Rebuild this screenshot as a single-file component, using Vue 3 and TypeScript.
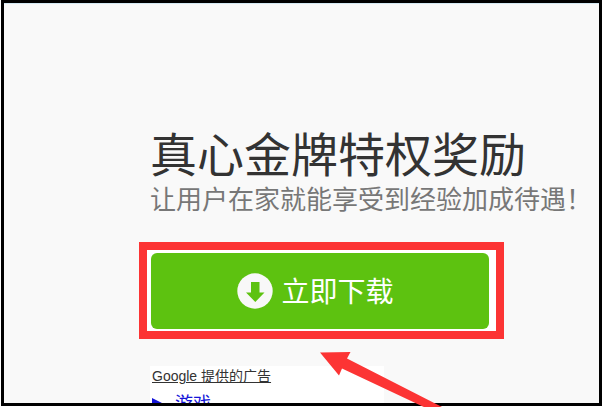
<script setup lang="ts">
const title: string = '真心金牌特权奖励'
const subtitle: string = '让用户在家就能享受到经验加成待遇！'
</script>

<template>
  <div class="page">
    <main class="frame">
      <h1 class="title">{{ title }}</h1>
      <p class="subtitle">{{ subtitle }}</p>
      <div class="highlight">
        <button type="button" class="download">
          <svg class="download-icon" viewBox="0 0 36 36" aria-hidden="true">
            <circle cx="18" cy="18" r="17.7" fill="#f8f8f8" />
            <path d="M14 9h8.500v10.500h5L18.300 29 9 19.500h5z" fill="#5dc210" />
          </svg>
          <span>立即下载</span>
        </button>
      </div>
      <section class="ads">
        <a href="#" class="ads-label">Google 提供的广告</a>
        <a href="#" class="ads-item">
          <svg class="marker" viewBox="0 0 12 12" aria-hidden="true">
            <path d="M0 0l12 6-12 6z" fill="#1515d8" />
          </svg>
          <span>游戏</span>
        </a>
      </section>
      <svg class="arrow" viewBox="0 0 124 56" aria-hidden="true">
        <path d="M0 0.500L30.500 0 27 6.500 124 56H106L22 16.500 19 23.500z" fill="#fc3434" />
      </svg>
    </main>
  </div>
</template>

<style>
body {
  margin: 0;
  background: #fff;
}
</style>

<style scoped>
.page {
  box-sizing: border-box;
  height: 100vh;
  padding: 0 2px 1px 1px;
  font-family: "Liberation Sans", "Noto Sans CJK SC", sans-serif;
}

.frame {
  position: relative;
  box-sizing: border-box;
  height: 100%;
  padding: 125px 0 0 135px;
  border: 3px solid #000;
  background: #f9f9f9;
  box-shadow: inset 0 1px #d5e9f3;
}

.title {
  margin: 0 0 0 11px;
  color: #333;
  font-family: "Noto Sans CJK SC", sans-serif;
  font-size: 47px;
  font-weight: 400;
  line-height: 48px;
  white-space: nowrap;
}

.subtitle {
  margin: 6px 0 0 11px;
  color: #777;
  font-family: "Noto Sans CJK SC", sans-serif;
  font-size: 26px;
  font-weight: 400;
  line-height: 32px;
  white-space: nowrap;
}

.highlight {
  box-sizing: border-box;
  width: 365px;
  margin-top: 28px;
  padding: 3px 7px 2px 4px;
  border: 8px solid #fc3434;
  background: #fff;
}

.download {
  display: flex;
  align-items: center;
  justify-content: center;
  gap: 8px;
  width: 100%;
  height: 76px;
  padding: 0 9px 0 0;
  border: 0;
  border-radius: 6px;
  background: #5dc210;
  color: #fff;
  font-family: "Noto Sans CJK SC", sans-serif;
  font-size: 28px;
  line-height: 36px;
  cursor: pointer;
}

.download-icon {
  width: 36px;
  height: 36px;
}

.download span {
  padding-bottom: 2px;
}

.ads {
  box-sizing: border-box;
  width: 234px;
  height: 37px;
  margin: 27px 0 0 11px;
  padding-left: 2px;
  overflow: hidden;
  background: #fff;
}

.ads-label {
  display: block;
  color: #333;
  font-size: 14px;
  line-height: 20px;
}

.ads-item {
  display: flex;
  align-items: center;
  gap: 11px;
  margin-top: 6px;
  color: #1515d8;
  font-size: 18px;
  line-height: 24px;
  text-decoration: none;
}

.marker {
  width: 12px;
  height: 12px;
}

.arrow {
  position: absolute;
  top: 349px;
  left: 316px;
  width: 124px;
  height: 56px;
}
</style>
